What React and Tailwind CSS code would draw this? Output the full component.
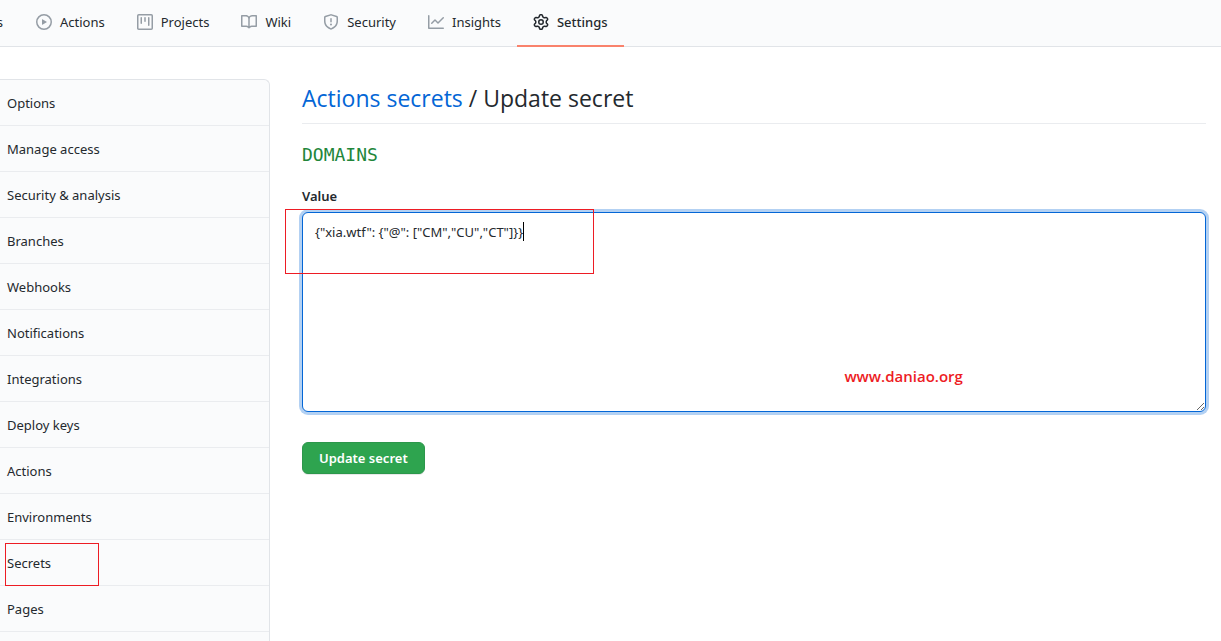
const ICONS = {
  play: 'M1.5 8a6.5 6.5 0 1113 0 6.5 6.5 0 01-13 0zM8 0a8 8 0 100 16A8 8 0 008 0zM6.379 5.227A.25.25 0 006 5.442v5.117a.25.25 0 00.379.214l4.264-2.559a.25.25 0 000-.428L6.379 5.227z',
  project:
    'M1.75 0A1.75 1.75 0 000 1.75v12.5C0 15.216.784 16 1.75 16h12.5A1.75 1.75 0 0016 14.25V1.75A1.75 1.75 0 0014.25 0H1.75zM1.5 1.75a.25.25 0 01.25-.25h12.5a.25.25 0 01.25.25v12.5a.25.25 0 01-.25.25H1.75a.25.25 0 01-.25-.25V1.75zM11.75 3a.75.75 0 00-.75.75v7.5a.75.75 0 001.5 0v-7.5a.75.75 0 00-.75-.75zm-8.25.75a.75.75 0 011.5 0v5.5a.75.75 0 01-1.5 0v-5.5zM8 3a.75.75 0 00-.75.75v3.5a.75.75 0 001.5 0v-3.5A.75.75 0 008 3z',
  book: 'M0 1.75A.75.75 0 01.75 1h4.253c1.227 0 2.317.59 3 1.501A3.744 3.744 0 0111.006 1h4.245a.75.75 0 01.75.75v10.5a.75.75 0 01-.75.75h-4.507a2.25 2.25 0 00-1.591.659l-.622.621a.75.75 0 01-1.06 0l-.622-.621A2.25 2.25 0 005.258 13H.75a.75.75 0 01-.75-.75V1.75zm8.755 3a2.25 2.25 0 012.25-2.25H14.5v9h-3.757c-.71 0-1.4.201-1.992.572l.004-7.322zm-1.504 7.324l.004-5.073-.002-2.253A2.25 2.25 0 005.003 2.5H1.5v9h3.757a3.75 3.75 0 011.994.574z',
  shield:
    'M7.467.133a1.75 1.75 0 011.066 0l5.25 1.68A1.75 1.75 0 0115 3.48V7c0 1.566-.32 3.182-1.303 4.682-.983 1.498-2.585 2.813-5.032 3.855a1.7 1.7 0 01-1.33 0c-2.447-1.042-4.049-2.357-5.032-3.855C1.32 10.182 1 8.566 1 7V3.48a1.75 1.75 0 011.217-1.667l5.25-1.68zm.61 1.429a.25.25 0 00-.153 0l-5.25 1.68a.25.25 0 00-.174.238V7c0 1.358.275 2.666 1.057 3.86.784 1.194 2.121 2.34 4.366 3.297a.2.2 0 00.154 0c2.245-.956 3.582-2.104 4.366-3.298C13.225 9.666 13.5 8.36 13.5 7V3.48a.25.25 0 00-.174-.237l-5.25-1.68zM9 10.5a1 1 0 11-2 0 1 1 0 012 0zm-.25-5.75a.75.75 0 10-1.5 0v3a.75.75 0 001.5 0v-3z',
  graph:
    'M1.5 1.75a.75.75 0 00-1.5 0v12.5c0 .414.336.75.75.75h14.5a.75.75 0 000-1.5H1.5V1.75zm14.28 2.53a.75.75 0 00-1.06-1.06L10 7.94 7.53 5.47a.75.75 0 00-1.06 0L3.22 8.72a.75.75 0 001.06 1.06L7 7.06l2.47 2.47a.75.75 0 001.06 0l5.25-5.25z',
  gear: 'M7.429 1.525a6.593 6.593 0 011.142 0c.036.003.108.036.137.146l.289 1.105c.147.56.55.967.997 1.189.174.086.341.183.501.29.417.278.97.423 1.53.27l1.102-.303c.11-.03.175.016.195.046.219.31.41.641.573.989.014.031.022.11-.059.19l-.815.806c-.411.406-.562.957-.53 1.456a4.588 4.588 0 010 .582c-.032.499.119 1.05.53 1.456l.815.806c.08.08.073.159.059.19a6.494 6.494 0 01-.573.99c-.02.029-.086.074-.195.045l-1.103-.303c-.559-.153-1.112-.008-1.529.27-.16.107-.327.204-.5.29-.449.222-.851.628-.998 1.189l-.289 1.105c-.029.11-.101.143-.137.146a6.613 6.613 0 01-1.142 0c-.036-.003-.108-.037-.137-.146l-.289-1.105c-.147-.56-.55-.967-.997-1.189a4.502 4.502 0 01-.501-.29c-.417-.278-.97-.423-1.53-.27l-1.102.303c-.11.03-.175-.016-.195-.046a6.492 6.492 0 01-.573-.989c-.014-.031-.022-.11.059-.19l.815-.806c.411-.406.562-.957.53-1.456a4.587 4.587 0 010-.582c.032-.499-.119-1.05-.53-1.456l-.815-.806c-.08-.08-.073-.159-.059-.19a6.44 6.44 0 01.573-.99c.02-.029.086-.075.195-.045l1.103.303c.559.153 1.112.008 1.529-.27.16-.107.327-.204.5-.29.449-.222.851-.628.998-1.189l.289-1.105c.029-.11.101-.143.137-.146zM8 0c-.236 0-.47.01-.701.03-.743.065-1.29.615-1.458 1.261l-.29 1.106c-.017.066-.078.158-.211.224a5.994 5.994 0 00-.668.386c-.123.082-.233.09-.3.071L3.27 2.776c-.644-.177-1.392.02-1.82.63a7.977 7.977 0 00-.704 1.217c-.315.675-.111 1.422.363 1.891l.815.806c.05.048.098.147.088.294a6.084 6.084 0 000 .772c.01.147-.038.246-.088.294l-.815.806c-.474.469-.678 1.216-.363 1.891.2.428.436.835.704 1.218.428.609 1.176.806 1.82.63l1.103-.303c.066-.019.176-.011.299.071.213.143.436.272.668.386.133.066.194.158.212.224l.289 1.106c.169.646.715 1.196 1.458 1.26a8.094 8.094 0 001.402 0c.743-.064 1.29-.614 1.458-1.26l.29-1.106c.017-.066.078-.158.211-.224a5.98 5.98 0 00.668-.386c.123-.082.233-.09.3-.071l1.102.302c.644.177 1.392-.02 1.82-.63.268-.382.505-.789.704-1.217.315-.675.111-1.422-.364-1.891l-.814-.806c-.05-.048-.098-.147-.088-.294a6.1 6.1 0 000-.772c-.01-.147.039-.246.088-.294l.814-.806c.475-.469.679-1.216.364-1.891a7.992 7.992 0 00-.704-1.218c-.428-.609-1.176-.806-1.82-.63l-1.103.303c-.066.019-.176.011-.299-.071a5.991 5.991 0 00-.668-.386c-.133-.066-.194-.158-.212-.224L10.16 1.29C9.99.645 9.444.095 8.701.031A8.094 8.094 0 008 0zm1.5 8a1.5 1.5 0 11-3 0 1.5 1.5 0 013 0zM11 8a3 3 0 11-6 0 3 3 0 016 0z',
};

const TABS = [
  { label: 'Actions', icon: 'play' },
  { label: 'Projects', icon: 'project' },
  { label: 'Wiki', icon: 'book' },
  { label: 'Security', icon: 'shield' },
  { label: 'Insights', icon: 'graph' },
  { label: 'Settings', icon: 'gear', current: true },
];

const MENU = [
  'Options',
  'Manage access',
  'Security & analysis',
  'Branches',
  'Webhooks',
  'Notifications',
  'Integrations',
  'Deploy keys',
  'Actions',
  'Environments',
  'Secrets',
  'Pages',
];

function Icon({ name, className }) {
  return (
    <svg viewBox="0 0 16 16" fill="currentColor" fillRule="evenodd" aria-hidden="true" className={`size-4 shrink-0 ${className}`}>
      <path d={ICONS[name]} />
    </svg>
  );
}

function RepoNav() {
  return (
    <nav className="flex h-[47px] border-b border-[#e1e4e8] bg-[#fafbfc]">
      <a href="#pulls" className="flex w-5 items-center justify-end pr-[17px] pb-[2px]">
        s
      </a>
      {TABS.map(({ label, icon, current }) => (
        <a
          key={label}
          href={`#${label.toLowerCase()}`}
          aria-current={current ? 'page' : undefined}
          className={`-mb-px flex items-center gap-2 border-b-2 px-4 pb-px ${
            current ? 'border-[#f9826c] font-medium' : 'border-transparent'
          }`}
        >
          <Icon name={icon} className={current ? 'text-[#24292e]' : 'text-[#959da5]'} />
          {label}
        </a>
      ))}
    </nav>
  );
}

function Sidebar() {
  return (
    <aside className="flex w-[270px] shrink-0 flex-col rounded-tr-md border-t border-r border-[#e1e4e8] bg-[#fafbfc]">
      <ul>
        {MENU.map((label) => (
          <li key={label} className="relative border-b border-[#eaecef]">
            <a href={`#menu-${label.toLowerCase().replace(/\W+/g, '-')}`} className="block pt-[13px] pb-[11px] pl-[7px]">
              {label}
            </a>
            {label === 'Secrets' && (
              <span className="pointer-events-none absolute top-[3px] left-[5px] h-[43px] w-[94px] border border-[#ed1c24]" />
            )}
          </li>
        ))}
      </ul>
    </aside>
  );
}

export default function App() {
  return (
    <div className="flex min-h-screen flex-col bg-white font-['Noto_Sans','Open_Sans',sans-serif] text-[13px] leading-[21px] text-[#24292e]">
      <RepoNav />
      <div className="flex flex-1 gap-8 pt-8 pr-[15px]">
        <Sidebar />
        <main className="min-w-0 flex-1">
          <h2 className="border-b border-[#eaecef] pt-[3px] pb-[9px] font-['Open_Sans',sans-serif] text-[23px] leading-8">
            <a href="#secrets" className="text-[#0366d6]">
              Actions secrets
            </a>{' '}
            / Update secret
          </h2>
          <form onSubmit={(event) => event.preventDefault()}>
            <p className="mt-4 font-['DejaVu_Sans_Mono',monospace] text-[18px] leading-[30px] text-[#22863a]">DOMAINS</p>
            <label htmlFor="secret-value" className="mt-4 block font-semibold">
              Value
            </label>
            <div className="relative mt-[5px]">
              <textarea
                id="secret-value"
                spellCheck={false}
                defaultValue={'{"xia.wtf": {"@": ["CM","CU","CT"]}}'}
                className="block h-[200px] w-full rounded-md border border-[#0366d6] bg-white px-3 py-[9px] shadow-[0_0_0_3px_#b3d1f3] outline-none"
              />
              <span className="pointer-events-none absolute top-[10px] left-[221px] h-[19px] w-px bg-black" />
              <span className="pointer-events-none absolute -top-[3px] -left-[17px] h-[65px] w-[309px] border border-[#ed1c24]" />
              <span className="pointer-events-none absolute top-[154px] left-[60%] font-['Open_Sans',sans-serif] text-[15px] font-semibold text-[#ed1c24]">
                www.daniao.org
              </span>
            </div>
            <button
              type="submit"
              className="mt-[30px] h-8 rounded-md border border-[#2c974b] bg-[#2ea44f] px-4 font-semibold text-white shadow-[0_1px_0_rgba(27,31,35,0.1)]"
            >
              Update secret
            </button>
          </form>
        </main>
      </div>
    </div>
  );
}
